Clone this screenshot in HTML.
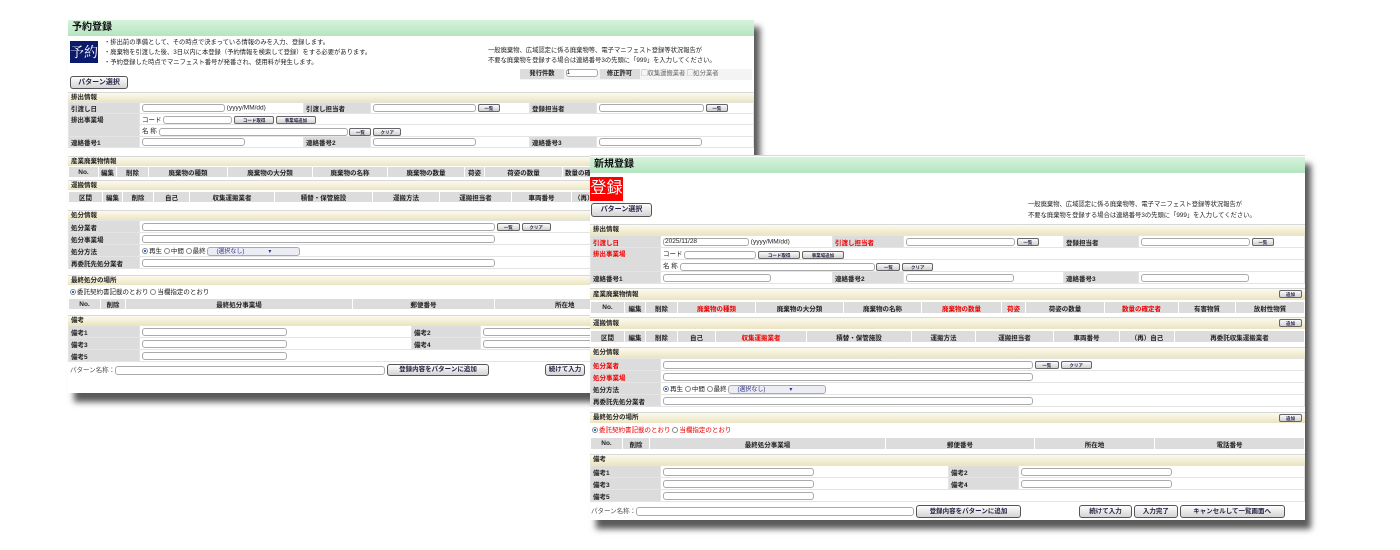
<!DOCTYPE html>
<html><head><meta charset="utf-8">
<style>
*{box-sizing:border-box;margin:0;padding:0}
body{width:1400px;height:550px;background:#fff;position:relative;overflow:hidden;font-family:"Liberation Sans","Noto Sans CJK JP",sans-serif;color:#222}
.win{position:absolute;background:#fff;box-shadow:6px 9px 6px rgba(0,0,0,.65)}
.a{position:absolute}
.tb{position:absolute;left:0;right:0;height:16px;background:linear-gradient(#d6f3dc,#b5e5c0);font-weight:bold;font-size:10px;line-height:16px;padding-left:4px;color:#111}
.sec{position:absolute;left:0;right:0;background:linear-gradient(#fcfaee,#ebe4c2);border-top:1px solid #d8d8d8;font-size:6.5px;font-weight:bold;padding-left:3px}
table{position:absolute;left:0;right:0;width:100%;border-collapse:collapse;table-layout:fixed;font-size:6.5px}
td{border:1px solid #e4e4e4;padding:0 2px;white-space:nowrap;overflow:hidden;vertical-align:middle}
td.l{background:#dcdcdc;font-weight:bold}
tr.h td{background:#dcdcdc;font-weight:bold;text-align:center;border-color:#fff}
.r{color:#e00}
.in{display:inline-block;height:8px;border:1px solid #aaa;border-radius:3px;background:#fff;vertical-align:middle}
.bt{display:inline-block;height:8px;border:1px solid #666;border-radius:2px;background:linear-gradient(#fafafa,#d0d0d0);font-size:4.5px;color:#224;line-height:7px;text-align:center;vertical-align:middle;font-weight:bold}
.bb{display:inline-block;border:1px solid #555;border-radius:3px;background:linear-gradient(#fdfdfd,#d4d4d4);color:#224;font-weight:bold;font-size:7px;text-align:center;vertical-align:middle}
.rd{display:inline-block;width:6px;height:6px;border:1px solid #888;border-radius:50%;vertical-align:middle;margin-right:1px}
.rd.on{background:radial-gradient(#1a6fd8 40%,#fff 45%)}
.sel{display:inline-block;height:9px;border:1px solid #aaa;border-radius:3px;background:#ececf4;color:#338;font-size:6px;padding-left:8px;vertical-align:middle;line-height:8px}
.note{font-size:6.5px;line-height:11px}
</style></head><body>

<!-- BACK WINDOW -->
<div class="win" style="left:68px;top:18px;width:686px;height:375px">
 <div class="tb" style="top:2px">予約登録</div>
 <div class="a" style="left:2px;top:23px;width:28px;height:22px;background:#0b1a6a;color:#fff;font-size:14px;line-height:22px;text-align:center;font-family:'Noto Serif CJK SC',serif">予約</div>
 <div class="a note" style="left:36px;top:20px;font-size:6.3px;line-height:10px">・排出前の準備として、その時点で決まっている情報のみを入力、登録します。<br>・廃棄物を引渡した後、3日以内に本登録（予約情報を検索して登録）をする必要があります。<br>・予約登録した時点でマニフェスト番号が発番され、使用料が発生します。</div>
 <div class="a note" style="left:420px;top:28px;font-size:6.3px;line-height:10px">一般廃棄物、広域認定に係る廃棄物等、電子マニフェスト登録等状況報告が<br>不要な廃棄物を登録する場合は連絡番号3の先頭に「999」を入力してください。</div>
 <div class="a" style="left:452px;top:51px;width:232px;height:11px;font-size:6.3px;line-height:10px;background:#f4f4f4">
  <span style="display:inline-block;width:44px;background:#dcdcdc;font-weight:bold;text-align:center">発行件数</span> <span class="in" style="width:32px;font-size:6px;line-height:6px">1</span> <span style="display:inline-block;width:40px;background:#dcdcdc;font-weight:bold;text-align:center">修正許可</span> <span style="color:#666">▢収集運搬業者 ▢処分業者</span></div>
 <div class="bb a" style="left:2px;top:58px;width:58px;height:13px;line-height:11px">パターン選択</div>

 <div class="sec" style="top:74px;height:10px;line-height:9px">排出情報</div>
 <table style="top:84px"><colgroup><col style="width:71px"><col style="width:164px"><col style="width:67px"><col style="width:159px"><col style="width:67px"><col></colgroup>
  <tr style="height:11px"><td class="l">引渡し日</td><td><span class="in" style="width:83px"></span> (yyyy/MM/dd)</td><td class="l">引渡し担当者</td><td><span class="in" style="width:103px"></span> <span class="bt" style="width:22px">一覧</span></td><td class="l">登録担当者</td><td><span class="in" style="width:105px"></span> <span class="bt" style="width:22px">一覧</span></td></tr>
  <tr style="height:11px"><td class="l" rowspan="2" style="vertical-align:top">排出事業場</td><td colspan="5">コード <span class="in" style="width:69px"></span> <span class="bt" style="width:40px">コード取得</span> <span class="bt" style="width:40px">事業場追加</span></td></tr>
  <tr style="height:11px"><td colspan="5">名 称 <span class="in" style="width:189px"></span> <span class="bt" style="width:22px">一覧</span> <span class="bt" style="width:28px">クリア</span></td></tr>
  <tr style="height:11px"><td class="l">連絡番号1</td><td><span class="in" style="width:103px"></span></td><td class="l">連絡番号2</td><td><span class="in" style="width:103px"></span></td><td class="l">連絡番号3</td><td><span class="in" style="width:103px"></span></td></tr>
 </table>
 <div class="sec" style="top:138px;height:10px;line-height:9px">産業廃棄物情報</div>
 <table style="top:148px"><colgroup><col style="width:30px"><col style="width:18px"><col style="width:32px"><col style="width:79px"><col style="width:85px"><col style="width:75px"><col style="width:77px"><col style="width:20px"><col style="width:78px"><col></colgroup>
 <tr class="h" style="height:11px"><td>No.</td><td>編集</td><td>削除</td><td>廃棄物の種類</td><td>廃棄物の大分類</td><td>廃棄物の名称</td><td>廃棄物の数量</td><td>荷姿</td><td>荷姿の数量</td><td style="text-align:left">数量の確定者</td></tr></table>
 <div class="sec" style="top:162px;height:10px;line-height:9px">運搬情報</div>
 <table style="top:173px"><colgroup><col style="width:34px"><col style="width:20px"><col style="width:31px"><col style="width:36px"><col style="width:85px"><col style="width:98px"><col style="width:67px"><col style="width:72px"><col style="width:60px"><col></colgroup>
 <tr class="h" style="height:11px"><td>区間</td><td>編集</td><td>削除</td><td>自己</td><td>収集運搬業者</td><td>積替・保管施設</td><td>運搬方法</td><td>運搬担当者</td><td>車両番号</td><td style="text-align:left">（再）自己</td></tr></table>

 <div class="sec" style="top:192px;height:10px;line-height:9px">処分情報</div>
 <table style="top:202px"><colgroup><col style="width:71px"><col></colgroup>
  <tr style="height:12px"><td class="l">処分業者</td><td><span class="in" style="width:353px"></span> <span class="bt" style="width:23px">一覧</span> <span class="bt" style="width:29px">クリア</span></td></tr>
  <tr style="height:12px"><td class="l">処分事業場</td><td><span class="in" style="width:353px"></span></td></tr>
  <tr style="height:12px"><td class="l">処分方法</td><td><span class="rd on"></span>再生 <span class="rd"></span>中間 <span class="rd"></span>最終 <span class="sel" style="width:93px">(選択なし)　　　　▾</span></td></tr>
  <tr style="height:12px"><td class="l">再委託先処分業者</td><td><span class="in" style="width:353px"></span></td></tr>
 </table>
 <div class="sec" style="top:257px;height:10px;line-height:9px">最終処分の場所</div>
 <div class="a" style="left:2px;top:268px;font-size:6.5px"><span class="rd on"></span>委託契約書記載のとおり <span class="rd"></span>当欄指定のとおり</div>
 <table style="top:280px"><colgroup><col style="width:32px"><col style="width:25px"><col style="width:227px"><col style="width:142px"><col></colgroup>
 <tr class="h" style="height:11px"><td>No.</td><td>削除</td><td>最終処分事業場</td><td>郵便番号</td><td style="text-align:left;padding-left:60px">所在地</td></tr></table>
 <div class="sec" style="top:297px;height:10px;line-height:9px">備考</div>
 <table style="top:307px"><colgroup><col style="width:71px"><col style="width:272px"><col style="width:69px"><col></colgroup>
  <tr style="height:12px"><td class="l">備考1</td><td><span class="in" style="width:145px"></span></td><td class="l">備考2</td><td><span class="in" style="width:145px"></span></td></tr>
  <tr style="height:12px"><td class="l">備考3</td><td><span class="in" style="width:145px"></span></td><td class="l">備考4</td><td><span class="in" style="width:145px"></span></td></tr>
  <tr style="height:12px"><td class="l">備考5</td><td colspan="3"><span class="in" style="width:145px"></span></td></tr>
 </table>
 <div class="a" style="left:2px;top:346px;font-size:6.5px;width:700px;white-space:nowrap"><span style="color:#555">パターン名称：</span><span class="in" style="width:270px;height:9px"></span> <span class="bb" style="width:102px;height:12px;line-height:10px;font-size:6.5px">登録内容をパターンに追加</span><span class="bb" style="width:40px;height:12px;line-height:10px;font-size:6.5px;margin-left:56px">続けて入力</span></div>
</div>

<!-- FRONT WINDOW -->
<div class="win" style="left:590px;top:155px;width:715px;height:365px;border-top:1px solid #bfe6c6">
 <div class="tb" style="top:1px">新規登録</div>
 <div class="a" style="left:0;top:21px;width:33px;height:24px;background:#f00;color:#fff;font-size:16px;line-height:24px;text-align:center">登録</div>
 <div class="bb a" style="left:1px;top:47px;width:61px;height:14px;line-height:12px">パターン選択</div>
 <div class="a note" style="left:438px;top:43px;font-size:6.3px;line-height:11px">一般廃棄物、広域認定に係る廃棄物等、電子マニフェスト登録等状況報告が<br>不要な廃棄物を登録する場合は連絡番号3の先頭に「999」を入力してください。</div>

 <div class="sec" style="top:68px;height:11px;line-height:10px">排出情報</div>
 <table style="top:79px"><colgroup><col style="width:70px"><col style="width:172px"><col style="width:71px"><col style="width:160px"><col style="width:75px"><col></colgroup>
  <tr style="height:12px"><td class="l r">引渡し日</td><td><span class="in" style="width:86px;font-size:6.5px;line-height:6px;padding-left:1px">2025/11/28</span> (yyyy/MM/dd)</td><td class="l r">引渡し担当者</td><td><span class="in" style="width:109px"></span> <span class="bt" style="width:22px">一覧</span></td><td class="l">登録担当者</td><td><span class="in" style="width:109px"></span> <span class="bt" style="width:22px">一覧</span></td></tr>
  <tr style="height:12px"><td class="l r" rowspan="2" style="vertical-align:top">排出事業場</td><td colspan="5">コード <span class="in" style="width:72px"></span> <span class="bt" style="width:42px">コード取得</span> <span class="bt" style="width:42px">事業場追加</span></td></tr>
  <tr style="height:12px"><td colspan="5">名 称 <span class="in" style="width:195px"></span> <span class="bt" style="width:24px">一覧</span> <span class="bt" style="width:31px">クリア</span></td></tr>
  <tr style="height:12px"><td class="l">連絡番号1</td><td><span class="in" style="width:108px"></span></td><td class="l">連絡番号2</td><td><span class="in" style="width:108px"></span></td><td class="l">連絡番号3</td><td><span class="in" style="width:108px"></span></td></tr>
 </table>

 <div class="sec" style="top:132px;height:12px;line-height:11px">産業廃棄物情報<span class="bt" style="position:absolute;right:3px;top:1px;width:23px">追加</span></div>
 <table style="top:145px"><colgroup><col style="width:34px"><col style="width:21px"><col style="width:32px"><col style="width:78px"><col style="width:88px"><col style="width:78px"><col style="width:80px"><col style="width:24px"><col style="width:79px"><col style="width:74px"><col style="width:57px"><col></colgroup>
 <tr class="h" style="height:12px"><td>No.</td><td>編集</td><td>削除</td><td class="r">廃棄物の種類</td><td>廃棄物の大分類</td><td>廃棄物の名称</td><td class="r">廃棄物の数量</td><td class="r">荷姿</td><td>荷姿の数量</td><td class="r">数量の確定者</td><td>有害物質</td><td>放射性物質</td></tr></table>
 <div class="sec" style="top:161px;height:12px;line-height:11px">運搬情報<span class="bt" style="position:absolute;right:3px;top:1px;width:23px">追加</span></div>
 <table style="top:174px"><colgroup><col style="width:34px"><col style="width:21px"><col style="width:32px"><col style="width:38px"><col style="width:91px"><col style="width:105px"><col style="width:64px"><col style="width:78px"><col style="width:66px"><col style="width:55px"><col></colgroup>
 <tr class="h" style="height:12px"><td>区間</td><td>編集</td><td>削除</td><td>自己</td><td class="r">収集運搬業者</td><td>積替・保管施設</td><td>運搬方法</td><td>運搬担当者</td><td>車両番号</td><td>（再）自己</td><td>再委託収集運搬業者</td></tr></table>

 <div class="sec" style="top:191px;height:11px;line-height:10px">処分情報</div>
 <table style="top:202px"><colgroup><col style="width:70px"><col></colgroup>
  <tr style="height:12px"><td class="l r">処分業者</td><td><span class="in" style="width:370px"></span> <span class="bt" style="width:24px">一覧</span> <span class="bt" style="width:31px">クリア</span></td></tr>
  <tr style="height:12px"><td class="l r">処分事業場</td><td><span class="in" style="width:370px"></span></td></tr>
  <tr style="height:12px"><td class="l">処分方法</td><td><span class="rd on"></span>再生 <span class="rd"></span>中間 <span class="rd"></span>最終 <span class="sel" style="width:98px">(選択なし)　　　　▾</span></td></tr>
  <tr style="height:12px"><td class="l">再委託先処分業者</td><td><span class="in" style="width:370px"></span></td></tr>
 </table>
 <div class="sec" style="top:256px;height:11px;line-height:10px">最終処分の場所<span class="bt" style="position:absolute;right:3px;top:1px;width:23px">追加</span></div>
 <div class="a r" style="left:2px;top:268px;font-size:6.5px"><span class="rd on"></span>委託契約書記載のとおり <span class="rd"></span>当欄指定のとおり</div>
 <table style="top:281px"><colgroup><col style="width:32px"><col style="width:27px"><col style="width:236px"><col style="width:149px"><col style="width:120px"><col></colgroup>
 <tr class="h" style="height:12px"><td>No.</td><td>削除</td><td>最終処分事業場</td><td>郵便番号</td><td>所在地</td><td>電話番号</td></tr></table>
 <div class="sec" style="top:298px;height:11px;line-height:10px">備考</div>
 <table style="top:309px"><colgroup><col style="width:70px"><col style="width:288px"><col style="width:70px"><col></colgroup>
  <tr style="height:12px"><td class="l">備考1</td><td><span class="in" style="width:151px"></span></td><td class="l">備考2</td><td><span class="in" style="width:151px"></span></td></tr>
  <tr style="height:12px"><td class="l">備考3</td><td><span class="in" style="width:151px"></span></td><td class="l">備考4</td><td><span class="in" style="width:151px"></span></td></tr>
  <tr style="height:12px"><td class="l">備考5</td><td colspan="3"><span class="in" style="width:151px"></span></td></tr>
 </table>
 <div class="a" style="left:1px;top:349px;font-size:6.5px;width:715px;white-space:nowrap"><span style="color:#555">パターン名称：</span><span class="in" style="width:278px;height:9px"></span> <span class="bb" style="width:105px;height:13px;line-height:11px;font-size:6.5px">登録内容をパターンに追加</span><span class="bb" style="width:53px;height:13px;line-height:11px;font-size:6.5px;margin-left:58px">続けて入力</span> <span class="bb" style="width:44px;height:13px;line-height:11px;font-size:6.5px">入力完了</span> <span class="bb" style="width:105px;height:13px;line-height:11px;font-size:6.5px">キャンセルして一覧画面へ</span></div>
</div>
</body></html>
